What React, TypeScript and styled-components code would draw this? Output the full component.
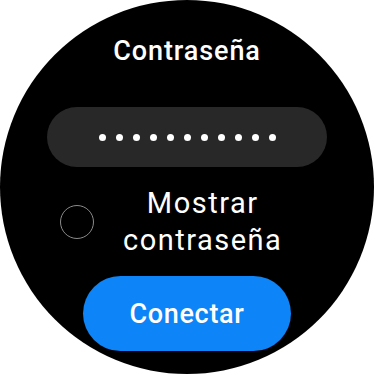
import { useState } from 'react';
import styled, { createGlobalStyle } from 'styled-components';

const GlobalStyle = createGlobalStyle`
  * { box-sizing: border-box; }
  html, body {
    margin: 0;
    padding: 0;
    background: #ffffff;
    font-family: Roboto, "Noto Sans", sans-serif;
  }
`;

export default function App() {
  const [shown, setShown] = useState(false);
  const password = 'abcdefghijk';

  return (
    <>
      <GlobalStyle />
      <Watch>
        <Title>Contraseña</Title>
        <Field>
          {shown ? (
            <PlainText>{password}</PlainText>
          ) : (
            password.split('').map((_, i) => <Dot key={i} />)
          )}
        </Field>
        <Row onClick={() => setShown((prev) => !prev)}>
          <Radio checked={shown} />
          <Label>
            Mostrar
            <br />
            contraseña
          </Label>
        </Row>
        <Button>Conectar</Button>
      </Watch>
    </>
  );
}

const Watch = styled.div`
  width: 374px;
  height: 374px;
  border-radius: 50%;
  background: #000000;
  overflow: hidden;
  display: flex;
  flex-direction: column;
  align-items: center;
  padding-top: 36px;
  color: #ffffff;
`;

const Title = styled.div`
  font-size: 27px;
  line-height: 31px;
  font-weight: 500;
  letter-spacing: 0.9px;
`;

const Field = styled.div`
  margin-top: 40px;
  width: 280px;
  height: 60px;
  border-radius: 30px;
  background: #282828;
  display: flex;
  align-items: center;
  justify-content: center;
  gap: 10px;
`;

const Dot = styled.span`
  width: 7px;
  height: 7px;
  border-radius: 50%;
  background: #ffffff;
`;

const PlainText = styled.span`
  font-size: 22px;
`;

const Row = styled.div`
  margin-top: 18px;
  width: 100%;
  display: flex;
  align-items: center;
  padding-left: 60px;
  cursor: pointer;
`;

const Radio = styled.span<{ checked: boolean }>`
  width: 34px;
  height: 34px;
  border-radius: 50%;
  border: 1.5px solid #8a8a8a;
  background: ${({ checked }) => (checked ? '#0d84f7' : 'transparent')};
  flex-shrink: 0;
`;

const Label = styled.div`
  margin-left: 29px;
  font-size: 29px;
  line-height: 37px;
  letter-spacing: 1.5px;
  text-align: center;
`;

const Button = styled.button`
  margin-top: 17px;
  width: 208px;
  height: 75px;
  border: none;
  border-radius: 38px;
  background: #0d84f7;
  color: #ffffff;
  font-family: Roboto, "Noto Sans", sans-serif;
  font-size: 27px;
  font-weight: 500;
  letter-spacing: 0.7px;
  cursor: pointer;
`;
